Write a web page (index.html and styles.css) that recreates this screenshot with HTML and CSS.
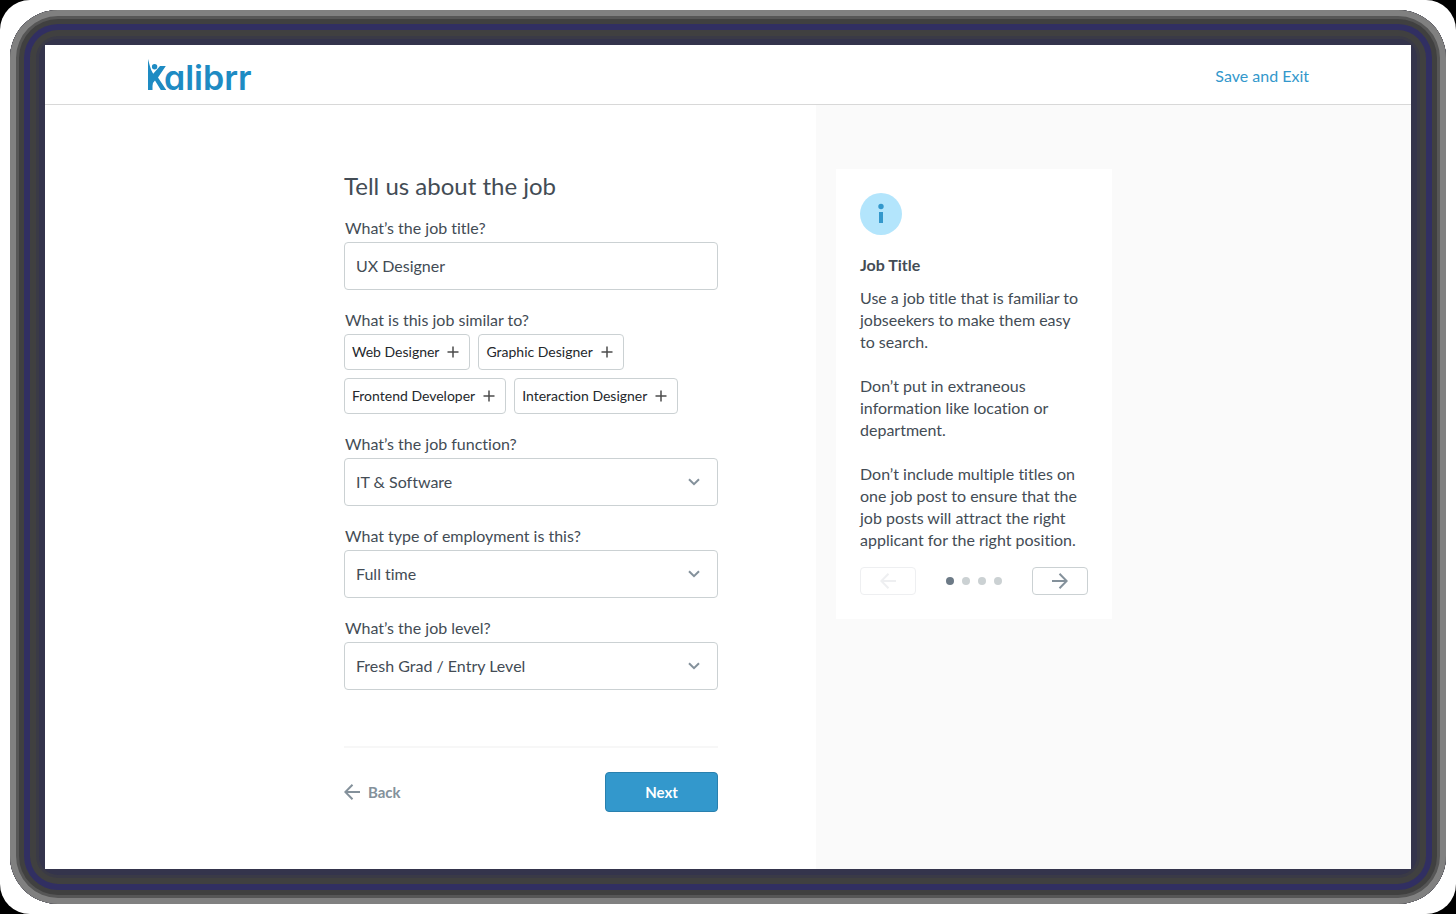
FILE: index.html
```html
<!DOCTYPE html>
<html lang="en">
<head>
<meta charset="utf-8">
<title>Kalibrr</title>
<link rel="stylesheet" href="styles.css">
</head>
<body>
<div class="shell">
<div class="frame">
<div class="window">
  <header class="header">
    <a class="logo" href="#" aria-label="Kalibrr">
      <svg width="112" height="36" viewBox="0 0 112 36" fill="currentColor">
        <path d="M1 2 2.600 8 4.200 13 6.200 16.800 13 9H18.800L11 20.600 19.300 33H13.800L8 23.600Q5.500 25.500 5.500 29V33H1Z"/>
        <circle cx="7.600" cy="9.700" r="2.700"/>
        <text class="logo-text" x="17" y="33">alibrr</text>
      </svg>
    </a>
    <a class="exit" href="#">Save and Exit</a>
  </header>
  <main class="main">
    <section class="left">
      <form class="form">
        <h1 class="title">Tell us about the job</h1>
        <div class="field">
          <label class="label" for="title">What’s the job title?</label>
          <input class="control" id="title" type="text" value="UX Designer">
        </div>
        <div class="field">
          <span class="label" id="similar">What is this job similar to?</span>
          <div class="chips" role="group" aria-labelledby="similar">
            <button class="chip" type="button">Web Designer<svg class="plus" viewBox="0 0 12 12"><path d="M6 0.500V11.500M0.500 6H11.500"/></svg></button>
            <button class="chip" type="button">Graphic Designer<svg class="plus" viewBox="0 0 12 12"><path d="M6 0.500V11.500M0.500 6H11.500"/></svg></button>
            <button class="chip" type="button">Frontend Developer<svg class="plus" viewBox="0 0 12 12"><path d="M6 0.500V11.500M0.500 6H11.500"/></svg></button>
            <button class="chip" type="button">Interaction Designer<svg class="plus" viewBox="0 0 12 12"><path d="M6 0.500V11.500M0.500 6H11.500"/></svg></button>
          </div>
        </div>
        <div class="field">
          <label class="label" for="function">What’s the job function?</label>
          <div class="picker">
            <select class="control" id="function"><option>IT &amp; Software</option></select>
            <svg class="chevron" viewBox="0 0 12 8"><path d="M1 1.200 6 6.200 11 1.200"/></svg>
          </div>
        </div>
        <div class="field">
          <label class="label" for="type">What type of employment is this?</label>
          <div class="picker">
            <select class="control" id="type"><option>Full time</option></select>
            <svg class="chevron" viewBox="0 0 12 8"><path d="M1 1.200 6 6.200 11 1.200"/></svg>
          </div>
        </div>
        <div class="field">
          <label class="label" for="level">What’s the job level?</label>
          <div class="picker">
            <select class="control" id="level"><option>Fresh Grad / Entry Level</option></select>
            <svg class="chevron" viewBox="0 0 12 8"><path d="M1 1.200 6 6.200 11 1.200"/></svg>
          </div>
        </div>
        <div class="actions">
          <button class="back" type="button"><svg class="arrow" viewBox="0 0 16 16"><path d="M16 8H1.500M8.500 0.800 1.300 8 8.500 15.200"/></svg>Back</button>
          <button class="next" type="submit">Next</button>
        </div>
      </form>
    </section>
    <aside class="right">
      <article class="card">
        <svg class="info" viewBox="0 0 42 42"><circle class="info-disc" cx="21" cy="21" r="21"/><circle cx="21" cy="13.500" r="2.700"/><path d="M19 19H23V30H19Z"/></svg>
        <h2 class="card-title">Job Title</h2>
        <p class="tip">Use a job title that is familiar to jobseekers to make them easy to search.</p>
        <p class="tip">Don’t put in extraneous information like location or department.</p>
        <p class="tip">Don’t include multiple titles on one job post to ensure that the job posts will attract the right applicant for the right position.</p>
        <div class="pager">
          <button class="page-button" type="button" disabled aria-label="Previous tip"><svg class="arrow" viewBox="0 0 16 16"><path d="M16 8H1.500M8.500 0.800 1.300 8 8.500 15.200"/></svg></button>
          <div class="dots"><span class="dot dot-on"></span><span class="dot"></span><span class="dot"></span><span class="dot"></span></div>
          <button class="page-button" type="button" aria-label="Next tip"><svg class="arrow" viewBox="0 0 16 16"><path d="M0 8H14.500M7.500 0.800 14.700 8 7.500 15.200"/></svg></button>
        </div>
      </article>
    </aside>
  </main>
</div>
</div>
</div>
</body>
</html>
```
FILE: styles.css
```css
* {
  box-sizing: border-box;
}

body {
  margin: 0;
  background: #000;
  color: #434c55;
  font: 16px/22px Lato, "Liberation Sans", sans-serif;
  font-variant-ligatures: none;
}

button,
input,
select {
  font: inherit;
  font-variant-ligatures: none;
  color: inherit;
}

h1,
h2,
p {
  margin: 0;
}

.shell {
  display: flex;
  min-height: 100vh;
  padding: 10px;
  border-radius: 30px;
  background: #fff;
}

.frame {
  flex: 1;
  display: flex;
  padding: 35px;
  border-radius: 48px;
  background: #34344c;
  box-shadow:
    inset 0 0 0 6px #808080,
    inset 0 0 0 9px #565656,
    inset 0 0 0 14px #404040,
    inset 0 0 0 20px #312f62,
    inset 0 0 0 26px #404040,
    inset 0 0 0 29px #3a3a46;
}

.window {
  flex: 1;
  display: flex;
  flex-direction: column;
  background: #fff;
}

.header {
  display: flex;
  align-items: center;
  justify-content: space-between;
  height: 60px;
  padding: 0 102px;
  border-bottom: 1px solid #d8d8d8;
}

.logo {
  display: flex;
  color: #1e8bc3;
}

.logo svg {
  overflow: visible;
}

.logo-text {
  font: 600 34px Inter, sans-serif;
  font-feature-settings: "cv11";
}

.exit {
  padding-top: 2px;
  color: #3398cc;
  text-decoration: none;
}

.main {
  flex: 1;
  display: grid;
  grid-template-columns: 771fr 595fr;
}

.left {
  display: flex;
  justify-content: flex-end;
  padding: 65px 98px 56px 20px;
}

.form {
  width: 374px;
  display: flex;
  flex-direction: column;
}

.title {
  margin-bottom: 15px;
  font-size: 24px;
  font-weight: 400;
  line-height: 32px;
}

.field {
  margin-bottom: 19px;
}

.label {
  display: block;
  padding: 0 0 3px 1px;
}

.control {
  display: block;
  width: 100%;
  height: 48px;
  padding: 0 11px 2px;
  border: 1px solid #cbd1d3;
  border-radius: 4px;
  background: #fff;
  appearance: none;
}

select.control {
  padding-bottom: 0;
}

.picker {
  display: grid;
  align-items: center;
}

.picker > * {
  grid-area: 1 / 1;
}

.chevron {
  justify-self: end;
  width: 12px;
  height: 8px;
  margin-right: 18px;
  fill: none;
  stroke: #84919b;
  stroke-width: 2;
  pointer-events: none;
}

.chips {
  display: flex;
  flex-wrap: wrap;
  gap: 8px;
}

.chip {
  display: flex;
  align-items: center;
  gap: 8px;
  height: 36px;
  padding: 0 10px 0 7px;
  border: 1px solid #cbd1d3;
  border-radius: 4px;
  background: #fff;
  color: #24282c;
  font-size: 14px;
}

.plus {
  width: 12px;
  height: 12px;
  fill: none;
  stroke: #4c4c4c;
  stroke-width: 1.5;
}

.actions {
  display: flex;
  align-items: center;
  justify-content: space-between;
  margin-top: 37px;
  padding-top: 24px;
  border-top: 2px solid #f7f7f7;
}

.back {
  display: flex;
  align-items: center;
  gap: 8px;
  padding: 0;
  border: 0;
  background: none;
  color: #84919b;
  font-size: 15px;
  font-weight: 700;
}

.arrow {
  width: 16px;
  height: 16px;
  fill: none;
  stroke: currentColor;
  stroke-width: 2;
}

.next {
  width: 113px;
  height: 40px;
  border: 1px solid #2980ae;
  border-radius: 4px;
  background: #3398cc;
  color: #fff;
  font-size: 15px;
  font-weight: 700;
}

.right {
  padding: 64px 20px;
  background: #fafafa;
}

.card {
  display: flex;
  flex-direction: column;
  width: 276px;
  padding: 24px;
  background: #fff;
}

.info {
  width: 42px;
  height: 42px;
  fill: #3398cc;
}

.info-disc {
  fill: #b3e5fc;
}

.card-title {
  margin: 19px 0 11px;
  font-size: 16px;
  font-weight: 700;
}

.tip + .tip {
  margin-top: 22px;
}

.pager {
  display: flex;
  align-items: center;
  justify-content: space-between;
  margin-top: 16px;
}

.page-button {
  display: flex;
  align-items: center;
  justify-content: center;
  width: 56px;
  height: 28px;
  padding: 0;
  border: 1px solid #cbd1d3;
  border-radius: 4px;
  background: #fff;
  color: #84919b;
}

.page-button:disabled {
  border-color: #eeeff1;
  color: #eeeff1;
}

.dots {
  display: flex;
  gap: 8px;
}

.dot {
  width: 8px;
  height: 8px;
  border-radius: 50%;
  background: #cbd1d3;
}

.dot-on {
  background: #6c7a86;
}
```
